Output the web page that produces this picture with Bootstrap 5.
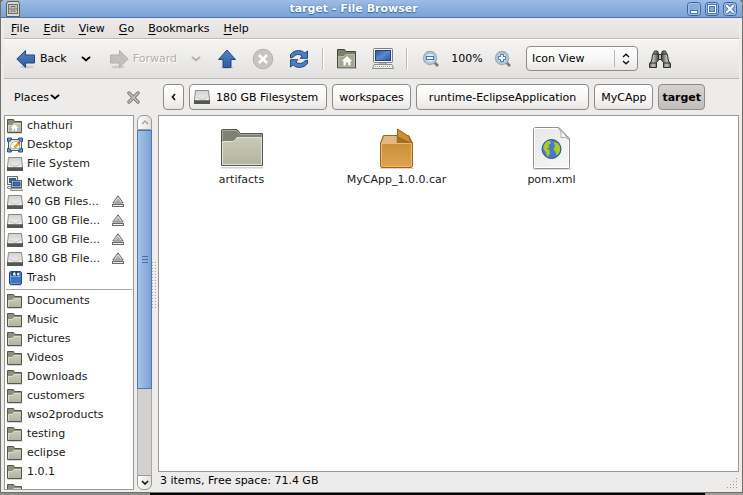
<!DOCTYPE html>
<html lang="en">
<head>
<meta charset="utf-8">
<meta name="viewport" content="width=device-width, initial-scale=1">
<title>target - File Browser</title>
<link rel="stylesheet" href="https://cdn.jsdelivr.net/npm/bootstrap@5.3.0/dist/css/bootstrap.min.css">
<style>
  body { font-family: "DejaVu Sans", sans-serif; font-size: 11px; line-height: 19px; color: #000; background: #77746f; }
  svg { display: block; flex: none; }
  .btn { --bs-btn-font-size: 11px; --bs-btn-line-height: 19px; --bs-btn-padding-x: 0; --bs-btn-padding-y: 0; --bs-btn-color: #000; --bs-btn-border-radius: 3px; font-family: inherit; border: 0; display: flex; align-items: center; justify-content: center; }
  .app-window { background: #edeceb; border: solid #716f6c; border-width: 0 1px 1px; border-radius: 5px 5px 0 0; min-height: 0; }
  .title-bar { height: 18px; padding: 0 5px; background: linear-gradient(#9dbbe4, #7ba2d6); border-bottom: 1px solid #4a77b4; border-radius: 5px 5px 0 0; }
  .title-bar h1 { font-size: 11px; line-height: 16px; font-weight: bold; color: #fff; text-shadow: 0 1px 1px #3d67a4, 0 0 2px #4d78b6; }
  .title-bar .btn { width: 14px; height: 14px; }
  .app-body { padding: 0 3px; min-height: 0; }
  .menu-bar { height: 21px; border-bottom: 1px solid #bdbbb9; background: linear-gradient(#edeceb, #e4e2e1); }
  .menu-bar a { color: #000; padding: 0 7px; text-decoration: none; }
  .menu-bar u { text-underline-offset: 2px; }
  .tool-bar { height: 40px; border-bottom: 1px solid #bdbbb9; background: linear-gradient(#f6f5f4, #e3e1e0); box-shadow: inset 0 1px #fff; padding-left: 6px; }
  .tool-bar .btn { height: 32px; }
  .tool-bar .btn:disabled { color: #b2aeab; opacity: 1; text-shadow: 1px 1px #fff; border: 0; }
  .labelled { padding: 0 6px; gap: 4px; }
  .drop { width: 26px; }
  .slot { width: 36px; }
  .tool-sep { width: 1px; height: 22px; background: #c0bdbb; box-shadow: 1px 0 #fff; margin: 0 6px 0 5px; }
  .gtk-box { border: 1px solid #8f8b88; border-radius: 4px; background: linear-gradient(#fff, #f6f5f4 60%, #e8e6e5); height: 26px; }
  .view-box { width: 112px; margin-left: 5px; padding-right: 7px; gap: 7px; height: 25px; }
  .view-box select { appearance: none; border: 0; border-right: 1px solid #b8b5b2; border-radius: 0; background: transparent; font-size: 11px; line-height: 17px; height: 17px; padding: 0 0 0 5px; color: #000; min-width: 0; }
  .panes { min-height: 0; }
  .side-pane { width: 148px; padding-bottom: 2px; }
  .pane-head { height: 36px; }
  .side-head { padding: 0 12px 0 10px; }
  .side-list { border: 1px solid #9c9996; background: #fff; margin-right: 3px; min-width: 0; min-height: 0; }
  .side-list li { height: 19px; flex: none; padding: 0 9px 0 2px; gap: 4px; }
  .side-list li a { color: #1a1a1a; text-decoration: none; gap: 4px; min-width: 0; }
  .side-list .side-rule { height: 4px; padding: 0; }
  .side-rule hr { margin: 0 1px; border-color: #a9a6a3; opacity: 1; }
  .side-list .btn { width: 12px; height: 16px; }
  .scroll-col { width: 15px; }
  .scroll-col .btn { height: 15px; flex: none; border: 1px solid #9c9996; background: linear-gradient(90deg, #fdfdfd, #e2e0df); }
  .trough { background: #d3d1cf; border: solid #aaa7a4; border-width: 0 1px; }
  .thumb { height: 75%; background: linear-gradient(90deg, #a5c4ec, #7da2d3); border: 1px solid #4d78b2; margin: 0 -1px; }
  .splitter { width: 6px; }
  .main-pane { min-width: 0; }
  .path-bar { gap: 5px; padding-left: 5px; }
  .path-bar .btn { border: 1px solid #8f8b88; border-radius: 4px; padding: 0 6px; }
  .path-bar .back-step { width: 21px; padding: 0; }
  .path-bar .drive-step { padding: 0 8px 0 4px; gap: 6px; }
  .path-bar .long-step { padding: 0 12px; }
  .path-bar .current-step { background: linear-gradient(#d5d3d1, #c0bdba); padding: 0 3px; font-weight: bold; }
  .file-view { background: #fff; border: 1px solid #9c9996; padding: 10px 5px; min-height: 0; }
  .file-item { width: 155px; color: #1a1a1a; text-decoration: none; }
  .file-item svg { margin: 0 auto; }
  .status { height: 20px; line-height: 17px; padding: 0 0 0 2px; }
  .desk-edge { height: 2px; background: linear-gradient(90deg, #8e8c89 150px, #05070a 150px, #05070a calc(100% - 38px), #a09e9b calc(100% - 38px)); }
</style>
<script src="https://cdn.jsdelivr.net/npm/bootstrap@5.3.0/dist/js/bootstrap.bundle.min.js"></script>
</head>
<body class="vh-100 d-flex flex-column overflow-hidden">

<svg width="0" height="0" class="position-absolute" aria-hidden="true">
  <defs>
    <linearGradient id="gBlue" x1="0" y1="0" x2="0" y2="1"><stop offset="0" stop-color="#5585c4"/><stop offset="1" stop-color="#2d5c9f"/></linearGradient>
    <linearGradient id="gFolder" x1="0" y1="0" x2="0" y2="1"><stop offset="0" stop-color="#c8c9b8"/><stop offset="1" stop-color="#b3b5a0"/></linearGradient>
    <linearGradient id="gDrive" x1="0" y1="0" x2="0" y2="1"><stop offset="0" stop-color="#d0d0ce"/><stop offset="1" stop-color="#fafafa"/></linearGradient>
    <linearGradient id="gBox" x1="0" y1="0" x2="0" y2="1"><stop offset="0" stop-color="#c68a35"/><stop offset="1" stop-color="#dda350"/></linearGradient>
    <linearGradient id="gScreen" x1="0" y1="0" x2="1" y2="1"><stop offset="0" stop-color="#2a569b"/><stop offset=".5" stop-color="#5a8acb"/><stop offset="1" stop-color="#2b579c"/></linearGradient>
    <linearGradient id="gPage" x1="0" y1="0" x2="1" y2="1"><stop offset="0" stop-color="#e6e6e5"/><stop offset="1" stop-color="#f8f8f8"/></linearGradient>
    <linearGradient id="gMetal" x1="0" y1="0" x2="1" y2="0"><stop offset="0" stop-color="#5b5d5a"/><stop offset=".4" stop-color="#c0c2bd"/><stop offset="1" stop-color="#444644"/></linearGradient>
  </defs>
  <symbol id="folder" viewBox="0 0 16 16">
    <path d="M.5 14.500V1.500H6.500L7.500 3.500H14.500V14.500Z" fill="#8d8f7d" stroke="#55574f"/>
    <path d="M1 14V7H5L7 5H14V14Z" fill="url(#gFolder)"/>
    <path d="M1.500 13.500V7.500H5.300L7.300 5.500H13.500" fill="none" stroke="#dfe0d4" stroke-width=".8"/>
    <path d="M.5 15.500H15.500" stroke="#000" opacity=".15"/>
  </symbol>
  <symbol id="home" viewBox="0 0 16 16">
    <use href="#folder"/>
    <path d="M7.500 6.300 3.800 10H5V13H6.800V11H8.200V13H10V10H11.200Z" fill="#fafaf5"/>
  </symbol>
  <symbol id="drive" viewBox="0 0 16 16">
    <path d="M1.500 1.500H14.500L15.500 11V14.500H.5V11Z" fill="url(#gDrive)" stroke="#8b8b89"/>
    <path d="M3 8Q8 12.500 13 8" fill="none" stroke="#bfbfbd"/>
    <path d="M0 11H16V15H0Z" fill="#555754"/><path d="M1 11.500H15" stroke="#777975"/>
  </symbol>
  <symbol id="desktop" viewBox="0 0 16 16">
    <rect x="1.500" y="2.500" width="13" height="11" fill="#e6e7d9" stroke="#54584c"/>
    <path d="M3.500 9Q4 5 8 4.500H12.500V11.500H5Q3 11 3.500 9Z" fill="#fff" stroke="#a6bd9d"/>
    <path d="M7 10 11 5.500 12.500 7 8.500 11Z" fill="#f2ae26" stroke="#9b660c" stroke-width=".5"/><path d="M10.500 5.500 12 4.500 13 6 12 7Z" fill="#d9382b"/>
    <path d="M.5 4.500V1H4.500L3.500 4ZM15.500 4.500V1H11.500L12.500 4ZM.5 11.500V15H4.500L3.500 12ZM15.500 11.500V15H11.500L12.500 12Z" fill="#6d9ad2" stroke="#244f8f"/>
  </symbol>
  <symbol id="network" viewBox="0 0 16 16">
    <rect x=".5" y="1.500" width="10" height="8" fill="#f1f1ef" stroke="#6d6f6b"/><rect x="2" y="3" width="7" height="5" fill="#2d5da5"/>
    <path d="M.5 11.500H5V13.500H.5Z" fill="#e3e3e1" stroke="#797b77" stroke-width=".8"/>
    <rect x="4.500" y="5.500" width="10" height="7" fill="#f1f1ef" stroke="#5d5f5b"/><rect x="6" y="7" width="7" height="4" fill="#3b6eb5" stroke="#204b8c"/>
    <path d="M4.500 13.500H14.500L15.500 15.500H3.500Z" fill="#e3e3e1" stroke="#797b77" stroke-width=".8"/>
  </symbol>
  <symbol id="trash" viewBox="0 0 16 16">
    <path d="M3.500 1.500H13.500L14.500 3V13Q14.500 14.500 13 14.500H4.500Q2.500 14.500 2.500 13V3Z" fill="#3f76c2" stroke="#1f4a8a"/>
    <path d="M4.500 2H13V6H4.500Z" fill="#233e68"/>
    <path d="M6 5.500V3L8 2L9 5.500ZM10 5.500V3L12.500 2.500V5.500Z" fill="#e4e8ee"/>
    <path d="M3.500 4V12.500Q3.500 13.500 5 13.500H13" fill="none" stroke="#6b9ce0"/><path d="M3 6.500H14" stroke="#79a6e4"/>
    <path d="M3 15.500H14" stroke="#000" opacity=".15"/>
  </symbol>
  <symbol id="eject" viewBox="0 0 12 13">
    <path d="M6 .8 11.200 8H.8Z" fill="#d8d8d6" stroke="#666863"/><path d="M6 3.500 8.500 7H3.500Z" fill="#a9aba6"/>
    <rect x=".5" y="9.500" width="11" height="2" fill="#f2f2f2" stroke="#666863"/>
  </symbol>
  <symbol id="chev" viewBox="0 0 10 6"><path d="M.8 1 Q3 2.200 5 4.500 Q7 2.200 9.200 1" fill="none" stroke="currentColor" stroke-width="1.800"/></symbol>
  <symbol id="arrow" viewBox="0 0 20 20">
    <ellipse cx="11" cy="18" rx="7" ry="1.500" fill="#000" stroke="none" opacity=".12"/>
    <path d="M.8 10 9.500 1.500V6H18.500V14H9.500V18.500Z"/>
  </symbol>
</svg>

<div class="app-window flex-fill d-flex flex-column">
  <header class="title-bar flex-shrink-0 d-flex align-items-center">
    <svg width="14" height="16" viewBox="0 0 14 16"><path d="M1.500.5H12.500L13.500 3V15.500H.5V3Z" fill="#d9d9d5" stroke="#5c5e58"/><rect x="2.500" y="3.500" width="9" height="9" fill="#c4c5bf" stroke="#6c6e68"/><path d="M2.500 8H11.500M5 6.500V5.500H9V6.500M5 11V10H9V11" fill="none" stroke="#6c6e68"/></svg>
    <h1 class="flex-fill text-center m-0">target - File Browser</h1>
    <div class="d-flex gap-1">
      <button class="btn" type="button" aria-label="Minimize"><svg width="14" height="14" viewBox="0 0 14 14"><rect x=".5" y=".5" width="13" height="13" rx="3" fill="#86abdc" stroke="#35619f"/><rect x="1.500" y="1.500" width="11" height="11" rx="2" fill="none" stroke="#a3c0e8"/><rect x="3.500" y="8.500" width="7" height="3" fill="#fff" stroke="#4a76b3"/></svg></button>
      <button class="btn" type="button" aria-label="Maximize"><svg width="14" height="14" viewBox="0 0 14 14"><rect x=".5" y=".5" width="13" height="13" rx="3" fill="#86abdc" stroke="#35619f"/><rect x="1.500" y="1.500" width="11" height="11" rx="2" fill="none" stroke="#a3c0e8"/><rect x="2.500" y="2.500" width="9" height="9" fill="#fff" stroke="#4a76b3"/><rect x="4.500" y="4.500" width="5" height="5" fill="#86abdc" stroke="#4a76b3"/></svg></button>
      <button class="btn" type="button" aria-label="Close"><svg width="14" height="14" viewBox="0 0 14 14"><rect x=".5" y=".5" width="13" height="13" rx="3" fill="#86abdc" stroke="#35619f"/><rect x="1.500" y="1.500" width="11" height="11" rx="2" fill="none" stroke="#a3c0e8"/><path d="M3 3 11 11M11 3 3 11" stroke="#4a76b3" stroke-width="4"/><path d="M3.300 3.300 10.700 10.700M10.700 3.300 3.300 10.700" stroke="#fff" stroke-width="2.200"/></svg></button>
    </div>
  </header>

  <div class="app-body flex-fill d-flex flex-column">
    <nav class="menu-bar flex-shrink-0 d-flex align-items-center" aria-label="Menu">
      <a href="#"><u>F</u>ile</a><a href="#"><u>E</u>dit</a><a href="#"><u>V</u>iew</a><a href="#"><u>G</u>o</a><a href="#"><u>B</u>ookmarks</a><a href="#"><u>H</u>elp</a>
    </nav>

    <div class="tool-bar flex-shrink-0 d-flex align-items-center" role="toolbar" aria-label="Navigation">
      <button class="btn labelled" type="button"><svg width="20" height="20" fill="url(#gBlue)" stroke="#20497f"><use href="#arrow"/></svg>Back</button>
      <button class="btn drop" type="button" aria-label="Back history"><svg width="10" height="6"><use href="#chev"/></svg></button>
      <button class="btn labelled ms-1" type="button" disabled><svg width="20" height="20" viewBox="0 0 20 20" fill="#c1c0be" stroke="#b2b1af"><g transform="matrix(-1 0 0 1 20 0)"><use href="#arrow" width="20" height="20"/></g></svg>Forward</button>
      <button class="btn drop" type="button" aria-label="Forward history" disabled><svg width="10" height="6"><use href="#chev"/></svg></button>
      <button class="btn slot" type="button" aria-label="Up"><svg width="20" height="20" viewBox="0 0 20 20"><ellipse cx="10" cy="18.500" rx="7" ry="1.500" opacity=".12"/><path d="M10 1 18.500 10.500H14V18.500H6V10.500H1.500Z" fill="url(#gBlue)" stroke="#20497f"/></svg></button>
      <button class="btn slot" type="button" aria-label="Stop"><svg width="22" height="22" viewBox="0 0 22 22"><circle cx="11" cy="11" r="9.800" fill="#c9c4c2" stroke="#b5b1af"/><path d="M7 7 15 15M15 7 7 15" stroke="#fff" stroke-width="2.600"/></svg></button>
      <button class="btn slot" type="button" aria-label="Reload"><svg width="20" height="20" viewBox="0 0 20 20"><g id="half" fill="#4c80c4" stroke="#20497f"><path d="M1.500 9V5.500Q4.500 1.500 9.500 1.500Q13.500 1.500 15.800 4L18.500 2V9.300H11.200L13.200 7Q11.500 5.200 8.500 5.500Q5.500 5.800 4.500 8Z"/></g><use href="#half" transform="rotate(180 10 10)"/></svg></button>
      <div class="tool-sep"></div>
      <button class="btn slot" type="button" aria-label="Home"><svg width="22" height="22" viewBox="0 0 22 22"><path d="M1.500 19.500V1.500H8.500L10 3.500H19.500V19.500Z" fill="#7b7e6d" stroke="#43463d"/><path d="M2.500 19V8.500H8L9.500 6.500H18.500V19Z" fill="#a3a691" stroke="#c3c5b4" stroke-width=".8"/><path d="M11 8 5.800 13H7.500V17.500H9.800V14.500H12.200V17.500H14.500V13H16.200Z" fill="#fbfbf7"/><path d="M1 20.500H21" stroke="#000" opacity=".2"/></svg></button>
      <button class="btn slot" type="button" aria-label="Computer"><svg width="22" height="22" viewBox="0 0 22 22"><rect x="1.500" y=".5" width="19" height="14" rx="1" fill="#f6f6f4" stroke="#7d7f7b"/><rect x="3.500" y="2.500" width="15" height="10" fill="url(#gScreen)" stroke="#1f457f"/><path d="M7 15H15V17H7Z" fill="#b5b5b3"/><path d="M2 16.500H20L21.500 20.500H.5Z" fill="#ededeb" stroke="#8b8d89"/><path d="M3 18.500H19" stroke="#a0a29e" stroke-dasharray="1 1"/></svg></button>
      <div class="tool-sep"></div>
      <button class="btn slot" type="button" aria-label="Zoom out"><svg width="18" height="18" viewBox="0 0 18 18"><path d="M12 12 16 16" stroke="#75777a" stroke-width="2.600"/><circle cx="8" cy="8" r="6.500" fill="#d5e3f5" stroke="#a5a7a4" stroke-width="1.300"/><circle cx="8" cy="8" r="5" fill="none" stroke="#8fb1de"/><rect x="4.500" y="6.500" width="7" height="3" fill="#fff" stroke="#4675b6"/></svg></button>
      <span class="slot text-center">100%</span>
      <button class="btn slot" type="button" aria-label="Zoom in"><svg width="18" height="18" viewBox="0 0 18 18"><path d="M12 12 16 16" stroke="#75777a" stroke-width="2.600"/><circle cx="8" cy="8" r="6.500" fill="#d5e3f5" stroke="#a5a7a4" stroke-width="1.300"/><circle cx="8" cy="8" r="5" fill="none" stroke="#8fb1de"/><path d="M6.500 4.500H9.500V6.500H11.500V9.500H9.500V11.500H6.500V9.500H4.500V6.500H6.500Z" fill="#fff" stroke="#4675b6"/></svg></button>
      <div class="gtk-box view-box d-flex align-items-center">
        <select class="flex-fill" aria-label="View as"><option>Icon View</option><option>List View</option><option>Compact View</option></select>
        <svg width="8" height="12" viewBox="0 0 8 12"><path d="M1 4 4 1.300 7 4M1 8 4 10.700 7 8" fill="none" stroke="#111" stroke-width="1.400"/></svg>
      </div>
      <button class="btn slot ms-1" type="button" aria-label="Search"><svg width="22" height="18" viewBox="0 0 22 18"><g id="barrel"><path d="M4.500 3.500 5.500 1H8.500L9.500 3.500V10L7.500 12.500V17.500H.5V13.500L2.500 11 3.500 5Z" fill="url(#gMetal)" stroke="#2c2e2b"/><path d="M1 13H8M3.500 4H9" stroke="#2c2e2b"/></g><use href="#barrel" transform="matrix(-1 0 0 1 22 0)"/><path d="M9.500 4.500H12.500V9.500H9.500Z" fill="#b6b8b3" stroke="#2c2e2b"/></svg></button>
    </div>

    <div class="panes flex-fill d-flex">
      <aside class="side-pane flex-shrink-0 d-flex flex-column">
        <div class="pane-head side-head flex-shrink-0 d-flex align-items-center justify-content-between">
          <button class="btn" type="button">Places<svg width="12" height="6"><use href="#chev"/></svg></button>
          <button class="btn" type="button" aria-label="Close side pane"><svg width="13" height="13" viewBox="0 0 13 13"><path d="M2 2 11 11M11 2 2 11" stroke="#7b7975" stroke-width="3.400" stroke-linecap="round"/><path d="M2 2 11 11M11 2 2 11" stroke="#c4c2be" stroke-width="1.600" stroke-linecap="round"/></svg></button>
        </div>
        <div class="panes flex-fill d-flex">
          <ul class="side-list list-unstyled flex-fill d-flex flex-column overflow-hidden mb-0">
            <li class="d-flex align-items-center"><a class="d-flex align-items-center" href="#"><svg width="16" height="16"><use href="#home"/></svg>chathuri</a></li>
            <li class="d-flex align-items-center"><a class="d-flex align-items-center" href="#"><svg width="16" height="16"><use href="#desktop"/></svg>Desktop</a></li>
            <li class="d-flex align-items-center"><a class="d-flex align-items-center" href="#"><svg width="16" height="16"><use href="#drive"/></svg>File System</a></li>
            <li class="d-flex align-items-center"><a class="d-flex align-items-center" href="#"><svg width="16" height="16"><use href="#network"/></svg>Network</a></li>
            <li class="d-flex align-items-center justify-content-between"><a class="d-flex align-items-center" href="#"><svg width="16" height="16"><use href="#drive"/></svg>40 GB Files...</a><button class="btn" type="button" aria-label="Eject"><svg width="12" height="13"><use href="#eject"/></svg></button></li>
            <li class="d-flex align-items-center justify-content-between"><a class="d-flex align-items-center" href="#"><svg width="16" height="16"><use href="#drive"/></svg>100 GB File...</a><button class="btn" type="button" aria-label="Eject"><svg width="12" height="13"><use href="#eject"/></svg></button></li>
            <li class="d-flex align-items-center justify-content-between"><a class="d-flex align-items-center" href="#"><svg width="16" height="16"><use href="#drive"/></svg>100 GB File...</a><button class="btn" type="button" aria-label="Eject"><svg width="12" height="13"><use href="#eject"/></svg></button></li>
            <li class="d-flex align-items-center justify-content-between"><a class="d-flex align-items-center" href="#"><svg width="16" height="16"><use href="#drive"/></svg>180 GB File...</a><button class="btn" type="button" aria-label="Eject"><svg width="12" height="13"><use href="#eject"/></svg></button></li>
            <li class="d-flex align-items-center"><a class="d-flex align-items-center" href="#"><svg width="16" height="16"><use href="#trash"/></svg>Trash</a></li>
            <li class="side-rule d-flex flex-column justify-content-center"><hr></li>
            <li class="d-flex align-items-center"><a class="d-flex align-items-center" href="#"><svg width="16" height="16"><use href="#folder"/></svg>Documents</a></li>
            <li class="d-flex align-items-center"><a class="d-flex align-items-center" href="#"><svg width="16" height="16"><use href="#folder"/></svg>Music</a></li>
            <li class="d-flex align-items-center"><a class="d-flex align-items-center" href="#"><svg width="16" height="16"><use href="#folder"/></svg>Pictures</a></li>
            <li class="d-flex align-items-center"><a class="d-flex align-items-center" href="#"><svg width="16" height="16"><use href="#folder"/></svg>Videos</a></li>
            <li class="d-flex align-items-center"><a class="d-flex align-items-center" href="#"><svg width="16" height="16"><use href="#folder"/></svg>Downloads</a></li>
            <li class="d-flex align-items-center"><a class="d-flex align-items-center" href="#"><svg width="16" height="16"><use href="#folder"/></svg>customers</a></li>
            <li class="d-flex align-items-center"><a class="d-flex align-items-center" href="#"><svg width="16" height="16"><use href="#folder"/></svg>wso2products</a></li>
            <li class="d-flex align-items-center"><a class="d-flex align-items-center" href="#"><svg width="16" height="16"><use href="#folder"/></svg>testing</a></li>
            <li class="d-flex align-items-center"><a class="d-flex align-items-center" href="#"><svg width="16" height="16"><use href="#folder"/></svg>eclipse</a></li>
            <li class="d-flex align-items-center"><a class="d-flex align-items-center" href="#"><svg width="16" height="16"><use href="#folder"/></svg>1.0.1</a></li>
            <li class="d-flex align-items-center"><a class="d-flex align-items-center" href="#" aria-label="More"><svg width="16" height="16"><use href="#folder"/></svg></a></li>
          </ul>
          <div class="scroll-col flex-shrink-0 d-flex flex-column">
            <button class="btn rounded-0 rounded-top" type="button" aria-label="Scroll up"><svg width="8" height="5" viewBox="0 0 8 5"><path d="M1 4 4 1 7 4" fill="none" stroke="#a5a29f" stroke-width="1.400"/></svg></button>
            <div class="trough flex-fill">
              <div class="thumb d-flex align-items-center justify-content-center"><svg width="6" height="8" viewBox="0 0 6 8"><path d="M0 1.500H6M0 4.500H6M0 7.500H6" stroke="#3f6cab"/></svg></div>
            </div>
            <button class="btn rounded-0 rounded-bottom" type="button" aria-label="Scroll down"><svg width="8" height="5" viewBox="0 0 8 5"><path d="M1 1 4 4 7 1" fill="none" stroke="#111" stroke-width="1.600"/></svg></button>
          </div>
        </div>
      </aside>

      <div class="splitter flex-shrink-0 d-flex align-items-center" aria-hidden="true">
        <svg width="6" height="48" viewBox="0 0 6 48"><defs><pattern id="dots" width="3" height="3" patternUnits="userSpaceOnUse"><rect width="1" height="1" fill="#a9a6a3"/><rect x="1" y="1" width="1" height="1" fill="#fff"/></pattern></defs><rect width="6" height="48" fill="url(#dots)"/></svg>
      </div>

      <main class="main-pane flex-fill d-flex flex-column">
        <nav class="pane-head path-bar flex-shrink-0 d-flex align-items-center" aria-label="Location">
          <button class="btn gtk-box back-step" type="button" aria-label="Earlier folders"><svg width="5" height="8" viewBox="0 0 5 8"><path d="M4 1 1.500 4 4 7" fill="none" stroke="#111" stroke-width="1.600"/></svg></button>
          <button class="btn gtk-box drive-step" type="button"><svg width="16" height="16"><use href="#drive"/></svg>180 GB Filesystem</button>
          <button class="btn gtk-box" type="button">workspaces</button>
          <button class="btn gtk-box long-step" type="button">runtime-EclipseApplication</button>
          <button class="btn gtk-box" type="button">MyCApp</button>
          <button class="btn gtk-box current-step" type="button" aria-pressed="true">target</button>
        </nav>
        <div class="file-view flex-fill d-flex flex-wrap align-content-start">
          <a class="file-item text-center" href="#"><svg width="44" height="44" viewBox="0 0 44 44"><path d="M1 41H43V42.500H1Z" opacity=".18"/><path d="M1.500 39.500V4.500Q1.500 3.500 2.500 3.500H17L20.500 7.500H42.500V39.500Z" fill="#7f8272" stroke="#55574f"/><path d="M2.500 14V4.500H16.500L20 8.500H41.500V11" fill="none" stroke="#a5a798"/><path d="M2.500 38.500V15.500H12Q14 15.500 15.500 13.500L17 11.500H41.500V38.500Z" fill="url(#gFolder)" stroke="#e2e3d8"/></svg>artifacts</a>
          <a class="file-item text-center" href="#"><svg width="44" height="44" viewBox="0 0 44 44"><path d="M5 42.500H39" stroke="#000" opacity=".15"/><path d="M5.500 17 8.500 9.500H33.500L37.500 17V39.500Q37.500 41.500 36 41.500H7Q5.500 41.500 5.500 39.500Z" fill="url(#gBox)" stroke="#a2640f"/><path d="M6.500 17 9.500 10H21.500V17Z" fill="#dfba87"/><path d="M22 17V10L37 17Z" fill="#a86f23"/><path d="M22.500 3V11L36.500 17.500 34 10.500Z" fill="#cc8e38" stroke="#9c6214"/><path d="M6.500 39.500V17.500H36.500V39.500Q36.500 40.500 35.500 40.500H7.500Q6.500 40.500 6.500 39.500Z" fill="none" stroke="#e8ba74"/></svg>MyCApp_1.0.0.car</a>
          <a class="file-item text-center" href="#"><svg width="44" height="44" viewBox="0 0 44 44"><path d="M3 43H41" stroke="#000" opacity=".25"/><path d="M5.500 1.500H29L39.500 12.500V40.500Q39.500 42.500 38 42.500H5.500Q3.500 42.500 3.500 40.500V3.500Q3.500 1.500 5.500 1.500Z" fill="url(#gPage)" stroke="#8f918e"/><path d="M4.500 41.500V2.500H28M38.500 13V41.500H4.500" fill="none" stroke="#fff"/><path d="M28 2Q32 5 31 11.500Q36 10 39 13.500L29 2Z" fill="#fff" stroke="#a7a9a6"/><circle cx="21.500" cy="23" r="9.500" fill="#4a7ac0" stroke="#2a5390"/><path d="M13.500 19.500 16.500 15.500 20 14.800 21 17 18.500 19 19.500 21 17 22.500 20 24.500 19.500 28.500 17.500 31 16 26.500 13.500 23ZM23.500 16 27.500 17 30 20.500 30 25 28 28.500 26.500 29.500 25.500 25.500 23.500 23.500 25 20Z" fill="#a9c92d"/></svg>pom.xml</a>
        </div>
        <footer class="status flex-shrink-0 d-flex justify-content-between align-items-end">
          <span class="align-self-start">3 items, Free space: 71.4 GB</span>
          <svg width="12" height="15" viewBox="0 0 12 15" aria-hidden="true"><path d="M9 1h1v1h-1zM6 4h1v1H6zM9 4h1v1h-1zM3 7h1v1H3zM6 7h1v1H6zM9 7h1v1h-1zM0 10h1v1H0zM3 10h1v1H3zM6 10h1v1H6zM9 10h1v1h-1z" fill="#9e9b98"/></svg>
        </footer>
      </main>
    </div>
  </div>
</div>
<div class="desk-edge flex-shrink-0"></div>
</body>
</html>
